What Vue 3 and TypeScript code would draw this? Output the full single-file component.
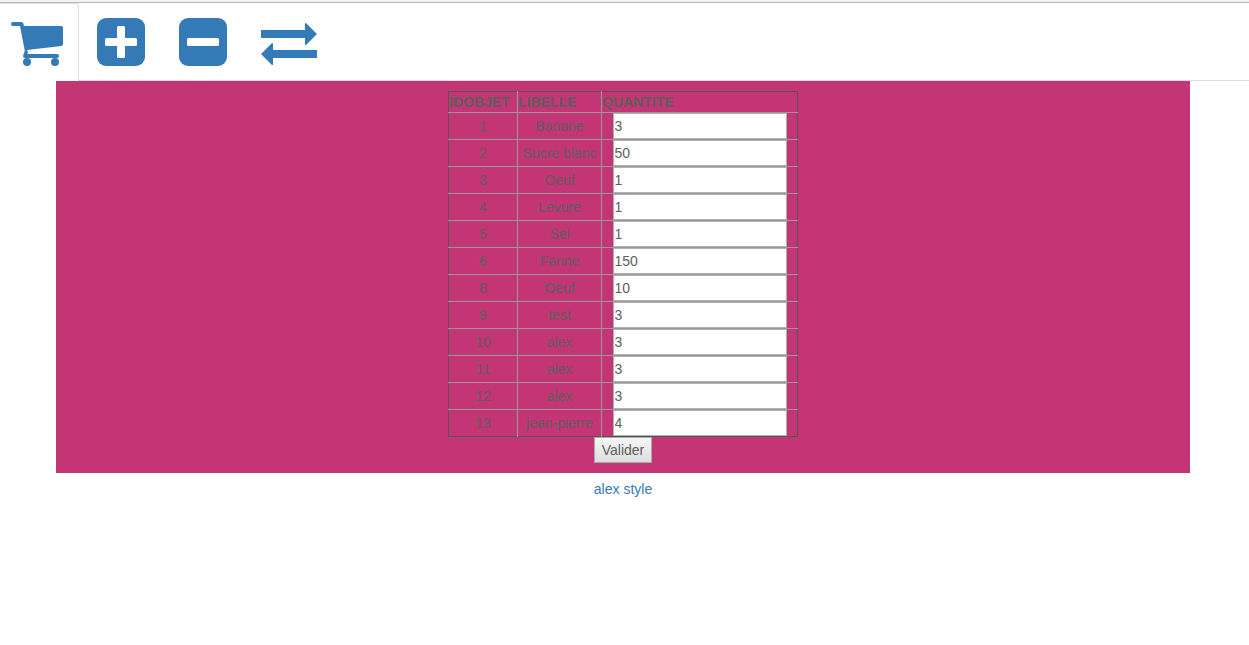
<script setup lang="ts">
import { reactive } from 'vue'

interface Item {
  id: number
  label: string
  quantity: string
}

const items = reactive<Item[]>([
  { id: 1, label: 'Banane', quantity: '3' },
  { id: 2, label: 'Sucre blanc', quantity: '50' },
  { id: 3, label: 'Oeuf', quantity: '1' },
  { id: 4, label: 'Levure', quantity: '1' },
  { id: 5, label: 'Sel', quantity: '1' },
  { id: 6, label: 'Farine', quantity: '150' },
  { id: 8, label: 'Oeuf', quantity: '10' },
  { id: 9, label: 'test', quantity: '3' },
  { id: 10, label: 'alex', quantity: '3' },
  { id: 11, label: 'alex', quantity: '3' },
  { id: 12, label: 'alex', quantity: '3' },
  { id: 13, label: 'jean-pierre', quantity: '4' },
])
</script>

<template>
  <div class="page">
    <nav>
      <ul class="tabs">
        <li class="active">
          <a href="#stock" aria-label="Stock">
            <svg width="56" height="56" viewBox="0 0 56 56">
              <path d="M4 8H12.500Q14.200 8 14.400 9.500L14.900 12H52.500Q54 12 54 13.500V30Q54 31.700 52.500 32L18 36L19 38L18.300 40H48Q50 40 50 42T48 44H16Q14 44 14 42L15.800 37L11 12H4Q2 12 2 10T4 8Z" />
              <circle cx="18" cy="48" r="4" />
              <circle cx="46" cy="48" r="4" />
            </svg>
          </a>
        </li>
        <li>
          <a href="#ajouter" aria-label="Ajouter">
            <svg width="56" height="56" viewBox="0 0 56 56">
              <rect x="4" y="4" width="48" height="48" rx="9" />
              <rect class="cut" x="12" y="24" width="32" height="8" rx="1.500" />
              <rect class="cut" x="24" y="12" width="8" height="32" rx="1.500" />
            </svg>
          </a>
        </li>
        <li>
          <a href="#retirer" aria-label="Retirer">
            <svg width="56" height="56" viewBox="0 0 56 56">
              <rect x="4" y="4" width="48" height="48" rx="9" />
              <rect class="cut" x="12" y="24" width="32" height="8" rx="1.500" />
            </svg>
          </a>
        </li>
        <li>
          <a href="#transferer" aria-label="Transférer">
            <svg width="64" height="56" viewBox="0 0 64 56">
              <path d="M4 16H48V9.500Q48.500 8.500 49.500 9.500L60 20L49.500 30.500Q48.500 31.500 48 30.500V24H4Z" />
              <path d="M60 36H16V29.500Q15.500 28.500 14.500 29.500L4 40L14.500 50.500Q15.500 51.500 16 50.500V44H60Z" />
            </svg>
          </a>
        </li>
      </ul>
    </nav>

    <form class="panel" @submit.prevent>
      <table>
        <colgroup>
          <col class="col-id" />
          <col class="col-label" />
          <col class="col-quantity" />
        </colgroup>
        <thead>
          <tr>
            <th scope="col">IDOBJET</th>
            <th scope="col">LIBELLE</th>
            <th scope="col">QUANTITE</th>
          </tr>
        </thead>
        <tbody>
          <tr v-for="item in items" :key="item.id">
            <td>{{ item.id }}</td>
            <td>{{ item.label }}</td>
            <td>
              <input v-model="item.quantity" type="text" :aria-label="`Quantité ${item.label}`" />
            </td>
          </tr>
        </tbody>
      </table>
      <button type="submit">Valider</button>
    </form>

    <footer><a href="#alex">alex style</a></footer>
  </div>
</template>

<style>
body {
  margin: 0;
  background: #fff;
}
</style>

<style scoped>
.page {
  border-top: 2px solid #f2f2f2;
  font: 14px/20px "Liberation Sans", Arial, sans-serif;
  color: #5e5e5e;
}

nav {
  border-top: 1px solid #b6b6b6;
}

.tabs {
  display: flex;
  gap: 2px;
  margin: 0;
  padding: 0;
  list-style: none;
  border-bottom: 1px solid #ddd;
}

.tabs a {
  display: block;
  padding: 11px 12px 10px;
}

.tabs .active {
  margin-bottom: -1px;
  background: #fff;
  border-top: 1px solid #ddd;
  border-right: 1px solid #ddd;
  border-top-right-radius: 4px;
}

.tabs .active a {
  padding: 10px 13px 11px 9px;
}

svg {
  display: block;
  fill: #337ab7;
}

.cut {
  fill: #fff;
}

.panel {
  display: flex;
  flex-direction: column;
  align-items: center;
  margin: 0 59px 0 56px;
  padding: 10px;
  background: #c43575;
}

table {
  width: 350px;
  table-layout: fixed;
  border-collapse: collapse;
  border: 1px solid #555;
}

.col-id {
  width: 69px;
}

.col-label {
  width: 84px;
}

th,
td {
  padding: 0;
  text-align: center;
}

th {
  text-align: left;
}

th + th,
td + td {
  border-left: 1px solid #999;
}

td {
  border-top: 1px solid #999;
}

input {
  display: block;
  box-sizing: border-box;
  width: 174px;
  height: 26px;
  margin: 0 auto;
  padding: 1px;
  border: 1px solid #b0b0b0;
  background: #fff;
  color: #5e5e5e;
  font: inherit;
}

button {
  height: 26px;
  padding: 0 7px;
  border: 1px solid #a9a9a9;
  background: linear-gradient(#f6f6f6, #dedede);
  color: #5e5e5e;
  font: inherit;
}

footer {
  margin: 6px 59px 0 56px;
  text-align: center;
}

footer a {
  color: #337ab7;
  text-decoration: none;
}
</style>
